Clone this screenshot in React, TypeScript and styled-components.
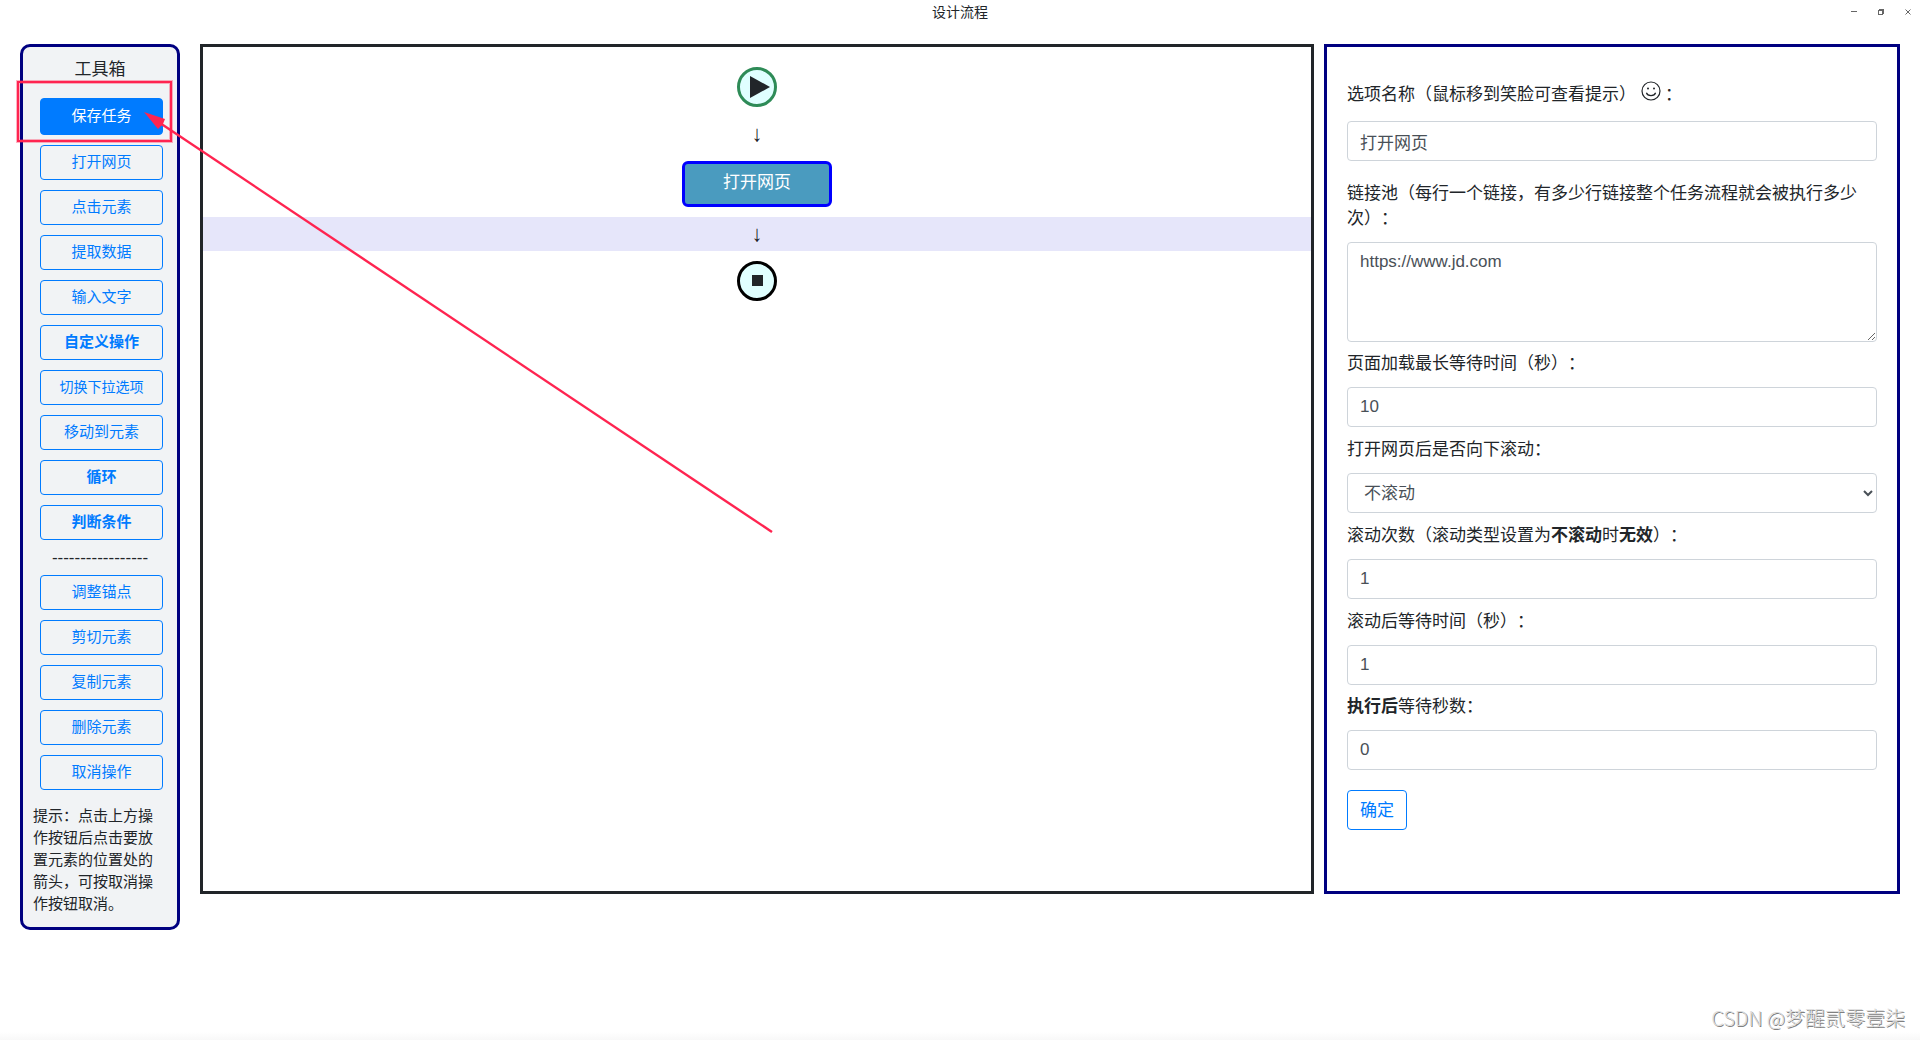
import React, { useState } from "react";
import styled, { createGlobalStyle } from "styled-components";

const color = {
  text: "#212529",
  field: "#495057",
  border: "#ced4da",
  primary: "#007bff",
  navy: "#000080",
  mark: "#ff2450",
};

const GlobalStyle = createGlobalStyle`
  *, *::before, *::after { box-sizing: border-box; }
  body {
    margin: 0;
    background: #fff;
    color: ${color.text};
    font-family: "Liberation Sans", "Noto Sans CJK SC", sans-serif;
    font-size: 17px;
    line-height: 25px;
    text-spacing-trim: space-all;
  }
  button, input, textarea, select { font: inherit; }
`;

const Page = styled.div`
  position: relative;
  display: flex;
  flex-direction: column;
  min-height: 100vh;
  background: linear-gradient(#fff, #f8f8f8) bottom / 100% 8px no-repeat;
`;

const TitleBar = styled.header`
  display: grid;
  grid-template-columns: 1fr auto 1fr;
  align-items: center;
  height: 24px;
`;

const WindowTitle = styled.h1`
  grid-column: 2;
  margin: 0;
  font-size: 14px;
  font-weight: 400;
  line-height: 24px;
`;

const WindowControls = styled.div`
  display: flex;
  justify-content: flex-end;
  gap: 3px;
`;

const WindowButton = styled.button`
  display: flex;
  align-items: center;
  justify-content: center;
  width: 24px;
  height: 24px;
  padding: 0;
  border: 0;
  background: none;
  color: #666;
`;

const Workspace = styled.main`
  display: grid;
  grid-template-columns: 160px minmax(0, 1fr) 30vw;
  align-items: start;
  padding: 20px 20px 0;
`;

const Toolbox = styled.aside`
  padding: 10px 10px 12px;
  border: 3px solid ${color.navy};
  border-radius: 10px;
  background: #f1f3f5;
`;

const ToolboxTitle = styled.h2`
  margin: 0 0 16px;
  font-size: 17px;
  font-weight: 400;
  text-align: center;
`;

const ToolList = styled.div`
  display: flex;
  flex-direction: column;
  gap: 10px;
  padding: 0 4px 0 7px;
`;

const ToolButton = styled.button<{ $strong?: boolean; $small?: boolean; $filled?: boolean }>`
  height: ${(p) => (p.$filled ? 37 : 35)}px;
  padding: 0 0 1px;
  border: 1px solid ${color.primary};
  border-radius: 4px;
  background: ${(p) => (p.$filled ? color.primary : "transparent")};
  color: ${(p) => (p.$filled ? "#fff" : color.primary)};
  font-size: ${(p) => (p.$small ? 14 : 15)}px;
  font-weight: ${(p) => (p.$strong ? 700 : 400)};
  line-height: 22px;
  white-space: nowrap;
  cursor: pointer;
`;

const Divider = styled.div`
  padding: 5px 0;
  text-align: center;
`;

const Hint = styled.p`
  margin: 15px 0 0;
  font-size: 15px;
  line-height: 22px;
`;

const Canvas = styled.section`
  display: flex;
  flex-direction: column;
  align-items: center;
  gap: 10px;
  min-height: 850px;
  margin: 0 10px 0 20px;
  padding-top: 20px;
  border: 3px solid ${color.text};
`;

const Terminal = styled.div<{ $ring: string }>`
  display: flex;
  align-items: center;
  justify-content: center;
  width: 40px;
  height: 40px;
  border: 3px solid ${(p) => p.$ring};
  border-radius: 50%;
  background: #e0ffff;
`;

const ArrowRow = styled.div<{ $active?: boolean }>`
  align-self: stretch;
  height: 34px;
  background: ${(p) => (p.$active ? "#e6e6fa" : "transparent")};
  font-size: 22px;
  line-height: 34px;
  text-align: center;
`;

const StepNode = styled.button`
  display: flex;
  justify-content: center;
  width: 150px;
  height: 46px;
  padding: 6px 0 0;
  border: 3px solid #0000ff;
  border-radius: 6px;
  background: #4a9bbf;
  color: #fff;
`;

const Panel = styled.form`
  display: flex;
  flex-direction: column;
  min-height: 850px;
  padding: 24px 20px;
  border: 3px solid ${color.navy};
`;

const Field = styled.div<{ $after?: number }>`
  display: flex;
  flex-direction: column;
  gap: 11px;
  margin-bottom: ${(p) => p.$after ?? 10}px;
`;

const Label = styled.label<{ $tall?: boolean }>`
  padding: ${(p) => (p.$tall ? "10px 0 3px" : "0")};
`;

const Smile = styled.svg`
  width: 20px;
  height: 20px;
  margin: 0 4px 0 5px;
  vertical-align: -1px;
`;

const TextInput = styled.input`
  height: 40px;
  padding: 6px 12px;
  border: 1px solid ${color.border};
  border-radius: 4px;
  background: #fff;
  color: ${color.field};
`;

const TextArea = styled.textarea`
  display: block;
  height: 100px;
  padding: 6px 12px;
  border: 1px solid ${color.border};
  border-radius: 4px;
  background: #fff;
  color: ${color.field};
  resize: vertical;
`;

const Select = styled.select`
  height: 40px;
  padding: 6px 12px;
  border: 1px solid ${color.border};
  border-radius: 4px;
  background: #fff;
  color: ${color.field};
`;

const SubmitButton = styled.button`
  align-self: flex-start;
  height: 40px;
  margin-top: 10px;
  padding: 0 12px;
  border: 1px solid ${color.primary};
  border-radius: 4px;
  background: transparent;
  color: ${color.primary};
  cursor: pointer;
`;

const Annotation = styled.svg`
  position: absolute;
  top: 0;
  left: 0;
  width: 780px;
  height: 540px;
  pointer-events: none;
`;

const Watermark = styled.footer`
  margin-top: auto;
  padding: 0 15px 7px;
  color: #dcdcdc;
  font-family: "Noto Sans CJK SC", sans-serif;
  font-size: 20px;
  font-weight: 300;
  line-height: 30px;
  text-align: right;
  text-shadow: 1px 1px 0 #808080;
`;

type Tool = { name: string; strong?: boolean; small?: boolean; filled?: boolean };

const addTools: Tool[] = [
  { name: "保存任务", filled: true },
  { name: "打开网页" },
  { name: "点击元素" },
  { name: "提取数据" },
  { name: "输入文字" },
  { name: "自定义操作", strong: true },
  { name: "切换下拉选项", small: true },
  { name: "移动到元素" },
  { name: "循环", strong: true },
  { name: "判断条件", strong: true },
];

const editTools: Tool[] = [
  { name: "调整锚点" },
  { name: "剪切元素" },
  { name: "复制元素" },
  { name: "删除元素" },
  { name: "取消操作" },
];

function Tools({ items }: { items: Tool[] }) {
  return (
    <ToolList>
      {items.map((t) => (
        <ToolButton key={t.name} type="button" $strong={t.strong} $small={t.small} $filled={t.filled}>
          {t.name}
        </ToolButton>
      ))}
    </ToolList>
  );
}

type InputFieldProps = { id: string; label: React.ReactNode; initial: string; after?: number; tall?: boolean };

function InputField({ id, label, initial, after, tall }: InputFieldProps) {
  const [value, setValue] = useState(initial);
  return (
    <Field $after={after}>
      <Label htmlFor={id} $tall={tall}>{label}</Label>
      <TextInput id={id} value={value} onChange={(e) => setValue(e.target.value)} />
    </Field>
  );
}

export default function App() {
  return (
    <Page>
      <GlobalStyle />
      <TitleBar>
        <WindowTitle>设计流程</WindowTitle>
        <WindowControls>
          <WindowButton type="button" aria-label="最小化">
            <svg width="8" height="8" viewBox="0 0 8 8"><path d="M1 3.5h6" stroke="currentColor" /></svg>
          </WindowButton>
          <WindowButton type="button" aria-label="还原">
            <svg width="8" height="8" viewBox="0 0 8 8" fill="none" stroke="currentColor" shapeRendering="crispEdges">
              <path d="M1.5 2.5h4v4h-4zM2 1.5h4.5v4.5" />
            </svg>
          </WindowButton>
          <WindowButton type="button" aria-label="关闭">
            <svg width="8" height="8" viewBox="0 0 8 8"><path d="M1.5 1.5l5 5M6.5 1.5l-5 5" stroke="currentColor" /></svg>
          </WindowButton>
        </WindowControls>
      </TitleBar>

      <Workspace>
        <Toolbox>
          <ToolboxTitle>工具箱</ToolboxTitle>
          <Tools items={addTools} />
          <Divider>-----------------</Divider>
          <Tools items={editTools} />
          <Hint>提示：点击上方操作按钮后点击要放置元素的位置处的箭头，可按取消操作按钮取消。</Hint>
        </Toolbox>

        <Canvas>
          <Terminal $ring="#2e8b57">
            <svg width="26" height="22" viewBox="0 0 26 22"><path d="M6 0l20 11L6 22z" fill={color.text} /></svg>
          </Terminal>
          <ArrowRow>↓</ArrowRow>
          <StepNode type="button">打开网页</StepNode>
          <ArrowRow $active>↓</ArrowRow>
          <Terminal $ring="#000">
            <svg width="12" height="12" viewBox="0 0 12 12"><path d="M1 0h11v11H1z" fill={color.text} /></svg>
          </Terminal>
        </Canvas>

        <Panel onSubmit={(e) => e.preventDefault()}>
          <InputField
            id="option-name"
            initial="打开网页"
            after={20}
            tall
            label={
              <>
                选项名称（鼠标移到笑脸可查看提示）
                <Smile viewBox="0 0 20 20" fill="none" stroke={color.text}>
                  <circle cx="10" cy="10" r="9" strokeWidth="1.2" />
                  <circle cx="7" cy="7.6" r="1" fill={color.text} stroke="none" />
                  <circle cx="13" cy="7.6" r="1" fill={color.text} stroke="none" />
                  <path d="M5.4 11.8c1.2 3.8 8 3.8 9.2 0" strokeWidth="1.2" />
                </Smile>
                ：
              </>
            }
          />
          <Field $after={9}>
            <Label htmlFor="links">链接池（每行一个链接，有多少行链接整个任务流程就会被执行多少次）：</Label>
            <TextArea id="links" defaultValue="https://www.jd.com" />
          </Field>
          <InputField id="load-wait" label="页面加载最长等待时间（秒）：" initial="10" />
          <Field>
            <Label htmlFor="scroll-type">打开网页后是否向下滚动：</Label>
            <Select id="scroll-type" defaultValue="none">
              <option value="none">不滚动</option>
            </Select>
          </Field>
          <InputField
            id="scroll-count"
            label={<>滚动次数（滚动类型设置为<b>不滚动</b>时<b>无效</b>）：</>}
            initial="1"
          />
          <InputField id="scroll-wait" label="滚动后等待时间（秒）：" initial="1" after={9} />
          <InputField id="after-wait" label={<><b>执行后</b>等待秒数：</>} initial="0" />
          <SubmitButton type="submit">确定</SubmitButton>
        </Panel>
      </Workspace>

      <Watermark>CSDN @梦醒贰零壹柒</Watermark>

      <Annotation viewBox="0 0 780 540" aria-hidden="true">
        <rect x="18" y="82" width="153" height="59" fill="none" stroke={color.mark} strokeWidth="4" opacity="0.35" />
        <rect x="18" y="82" width="153" height="59" fill="none" stroke={color.mark} strokeWidth="2" />
        <path d="M160 123L772 532" stroke={color.mark} strokeWidth="2.4" />
        <path d="M144 112l21 7-2 5-5 5z" fill={color.mark} />
      </Annotation>
    </Page>
  );
}
